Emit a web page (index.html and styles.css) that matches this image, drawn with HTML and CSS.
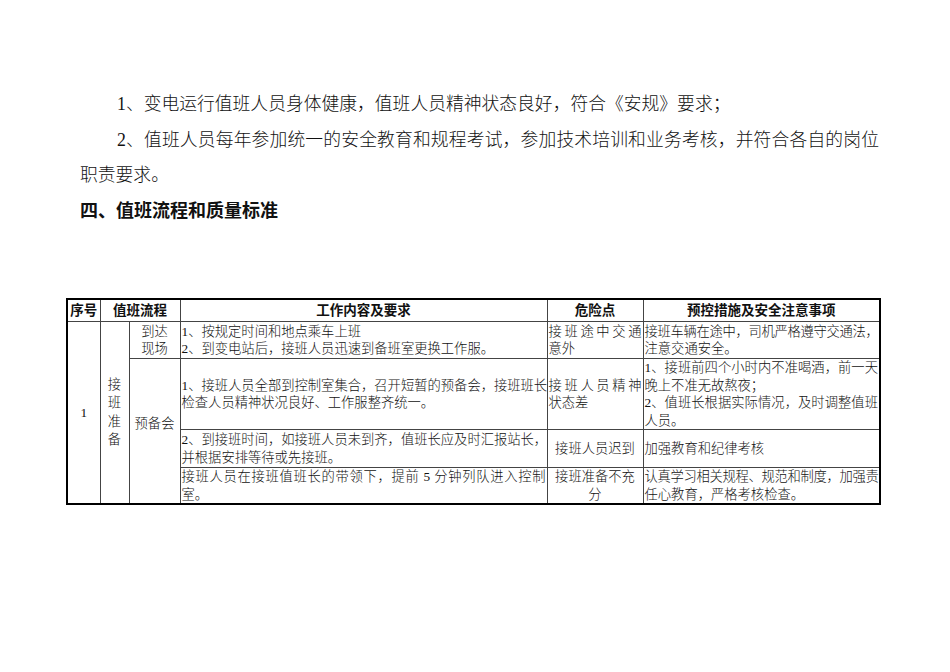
FILE: index.html
```html
<!DOCTYPE html>
<html lang="zh-CN">
<head>
<meta charset="utf-8">
<title>值班流程和质量标准</title>
<link rel="stylesheet" href="styles.css">
</head>
<body>
<div class="page">
  <div class="text">
    <p class="para">1、变电运行值班人员身体健康，值班人员精神状态良好，符合《安规》要求；</p>
    <p class="para">2、值班人员每年参加统一的安全教育和规程考试，参加技术培训和业务考核，并符合各自的岗位职责要求。</p>
    <h2 class="heading">四、值班流程和质量标准</h2>
  </div>
  <table class="grid">
    <colgroup>
      <col class="c1"><col class="c2"><col class="c3"><col class="c4"><col class="c5"><col class="c6">
    </colgroup>
    <tr class="hrow">
      <th>序号</th>
      <th colspan="2">值班流程</th>
      <th>工作内容及要求</th>
      <th>危险点</th>
      <th>预控措施及安全注意事项</th>
    </tr>
    <tr class="r1">
      <td rowspan="4" class="center">1</td>
      <td rowspan="4" class="vert">接班准备</td>
      <td class="center">到达<br>现场</td>
      <td><span class="ln">1、按规定时间和地点乘车上班</span><span class="ln">2、到变电站后，接班人员迅速到备班室更换工作服。</span></td>
      <td><span class="ln j">接班途中交通</span><span class="ln">意外</span></td>
      <td><span class="ln j tight">接班车辆在途中，司机严格遵守交通法，</span><span class="ln">注意交通安全。</span></td>
    </tr>
    <tr class="r2">
      <td rowspan="3" class="center stage">预备会</td>
      <td><span class="ln j">1、接班人员全部到控制室集合，召开短暂的预备会，接班班长</span><span class="ln">检查人员精神状况良好、工作服整齐统一。</span></td>
      <td><span class="ln j">接班人员精神</span><span class="ln">状态差</span></td>
      <td><span class="ln j">1、接班前四个小时内不准喝酒，前一天</span><span class="ln">晚上不准无故熬夜；</span><span class="ln j">2、值班长根据实际情况，及时调整值班</span><span class="ln">人员。</span></td>
    </tr>
    <tr class="r3">
      <td><span class="ln j">2、到接班时间，如接班人员未到齐，值班长应及时汇报站长，</span><span class="ln">并根据安排等待或先接班。</span></td>
      <td class="center">接班人员迟到</td>
      <td>加强教育和纪律考核</td>
    </tr>
    <tr class="r4">
      <td><span class="ln j">接班人员在接班值班长的带领下，提前 5 分钟列队进入控制</span><span class="ln">室。</span></td>
      <td class="center">接班准备不充<br>分</td>
      <td><span class="ln j tight">认真学习相关规程、规范和制度，加强责</span><span class="ln">任心教育，严格考核检查。</span></td>
    </tr>
  </table>
</div>
</body>
</html>
```

FILE: styles.css
```css
html, body {
  margin: 0;
  padding: 0;
  background: #ffffff;
}

body {
  color: #111111;
  font-family: "Liberation Serif", "Noto Sans CJK SC", serif;
}

.page {
  width: 950px;
  padding-top: 87px;
}

.text {
  width: 799px;
  margin-left: 80px;
}

.para {
  margin: 0;
  font-size: 17.8px;
  line-height: 35.7px;
  text-indent: 37px;
  text-align: justify;
  font-weight: 300;
}

.heading {
  margin: 0;
  font-family: "Liberation Sans", "Noto Sans CJK SC", sans-serif;
  font-size: 18px;
  line-height: 35.7px;
  font-weight: 700;
}

.grid {
  margin-top: 68px;
  margin-left: 66px;
  width: 814px;
  table-layout: fixed;
  border-collapse: collapse;
  border: 2px solid #000000;
  font-size: 13.3px;
  line-height: 17.5px;
  font-weight: 300;
}

.c1 { width: 33px; }
.c2 { width: 29px; }
.c3 { width: 51px; }
.c4 { width: 367px; }
.c5 { width: 96px; }
.c6 { width: 237px; }

.grid th,
.grid td {
  border: 1px solid #444444;
  padding: 0 1px;
  vertical-align: middle;
  text-align: left;
  overflow: hidden;
}

.grid th {
  font-family: "Liberation Sans", "Noto Sans CJK SC", sans-serif;
  font-weight: 700;
  text-align: center;
  font-size: 13.5px;
}

.hrow { height: 23px; }
.r1 { height: 37px; }
.r2 { height: 70px; }
.r3 { height: 38px; }
.r4 { height: 33px; }

.center {
  text-align: center !important;
}

.vert {
  text-align: center !important;
  padding: 0 7px !important;
  line-height: 18.5px;
}

.stage {
  padding-bottom: 16px !important;
}

.ln {
  display: block;
  white-space: nowrap;
}

.ln.j {
  text-align: justify;
  text-align-last: justify;
}

.ln.tight {
  letter-spacing: -0.3px;
}
```
